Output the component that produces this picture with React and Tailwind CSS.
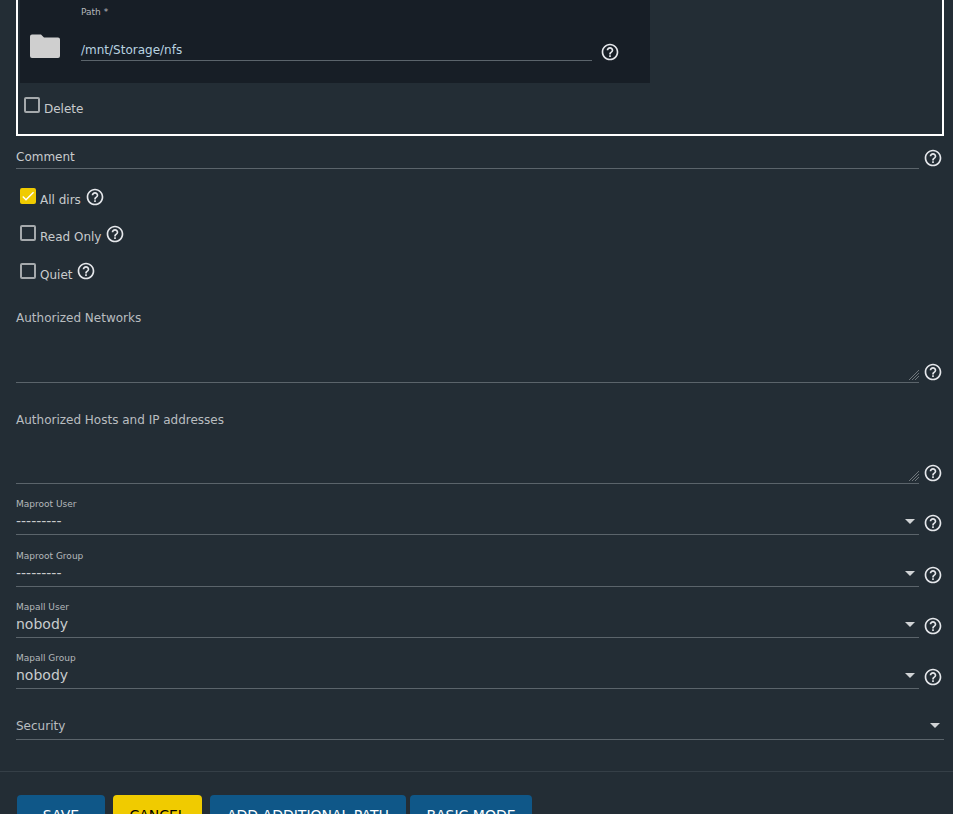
import React from "react";
import { MdHelpOutline, MdCheck } from "react-icons/md";

const Help = ({ className = "" }) => (
  <MdHelpOutline className={"text-xl text-gray-200 shrink-0 " + className} />
);

const Folder = () => (
  <svg className="w-8 h-6 ml-[-1px]" viewBox="0 0 32 24" fill="#cfcfcf">
    <path d="M1 2.5a2 2 0 0 1 2-2h9l3 3h14a2 2 0 0 1 2 2V22a2 2 0 0 1-2 2H3a2 2 0 0 1-2-2z" />
  </svg>
);

const Caret = () => (
  <div className="w-0 h-0 border-x-[5px] border-x-transparent border-t-[5px] border-t-[#d0d3d5]" />
);

const Check = ({ on, label, help = true, className = "", helpClass = "-mt-0.5" }) => (
  <div className={"flex items-center h-5 " + className}>
    <div
      className={
        "w-4 h-4 rounded-xs border-2 flex items-center justify-center -mt-1 " +
        (on ? "bg-[#f0cb00] border-[#f0cb00]" : "border-[#a5a9ac]")
      }
    >
      {on && <MdCheck className="text-white text-base shrink-0" />}
    </div>
    <span className="ml-1 mt-1 text-xs text-[#c8cbcd]">{label}</span>
    {help && <Help className={"ml-1 " + helpClass} />}
  </div>
);

const Select = ({ label, value, h = "h-[51px]" }) => (
  <div className={"flex items-end gap-1 pr-px " + h}>
    <div className="flex-1 border-b border-[#5b646b] h-9 flex flex-col">
      <div className="text-[9px] leading-3 -mt-px text-[#b4b8bb]">{label}</div>
      <div className="flex items-center justify-between flex-1 pr-1 pb-0.5">
        <span className="text-sm text-[#c8cbcd]">{value}</span>
        <Caret />
      </div>
    </div>
    <Help className="mb-0.5" />
  </div>
);

const TextArea = ({ label, h }) => (
  <div>
    <div className="text-xs text-[#b9bdc0] h-4">{label}</div>
    <div className="flex items-end gap-1 pr-px">
      <div className={"flex-1 border-b border-[#5b646b] relative " + h}>
        <svg className="absolute right-0 bottom-0.5 w-2.5 h-2.5" viewBox="0 0 10 10" stroke="#70777c" strokeWidth="1">
          <path d="M0 10 10 0M3 10 10 3M6 10 10 6" />
        </svg>
      </div>
      <Help className="mb-px" />
    </div>
  </div>
);

const Btn = ({ children, className }) => (
  <div className={"h-9 rounded-sm flex items-center justify-center text-sm pt-1 " + className}>{children}</div>
);

export default function App() {
  return (
    <div
      className="h-[814px] overflow-hidden bg-[#232d35] px-4 pr-[9px]"
      style={{ fontFamily: '"DejaVu Sans", sans-serif' }}
    >
      <div className="h-[136px] border-x-2 border-b-2 border-white pt-0 pl-0.5">
        <div className="w-[630px] h-[83px] bg-[#171e26] flex">
          <div className="w-[61px] pl-2.5 pt-[34px]">
            <Folder />
          </div>
          <div className="w-[511px] pt-1.5">
            <div className="text-[9px] leading-3 text-[#b4b8bb]">Path *</div>
            <div className="mt-6 h-[19px] border-b border-[#5b646b] text-xs text-[#b9d3e0]">/mnt/Storage/nfs</div>
          </div>
          <Help className="ml-2 mt-[42px]" />
        </div>
        <Check label="Delete" help={false} className="ml-1 mt-3.5" />
      </div>

      <div className="flex items-end gap-1 pr-px mt-[9px]">
        <div className="flex-1 border-b border-[#5b646b] h-6 text-xs text-[#c8cbcd] pt-1">Comment</div>
        <Help className="mb-px" />
      </div>

      <div className="mt-[19px] ml-1 flex flex-col gap-[17px]">
        <Check on label="All dirs" />
        <Check label="Read Only" />
        <Check label="Quiet" className="mt-px" helpClass="-mt-1" />
      </div>

      <div className="mt-[27px]">
        <TextArea label="Authorized Networks" h="h-[57px]" />
      </div>
      <div className="mt-[29px]">
        <TextArea label="Authorized Hosts and IP addresses" h="h-14" />
      </div>

      <Select label="Maproot User" value="---------" />
      <Select label="Maproot Group" value="---------" h="h-[52px]" />
      <Select label="Mapall User" value="nobody" />
      <Select label="Mapall Group" value="nobody" />

      <div className="h-[51px] flex items-end">
        <div className="flex-1 border-b border-[#5b646b] h-7 flex items-center justify-between pr-1 text-xs text-[#b9bdc0]">
          Security
          <Caret />
        </div>
      </div>

      <div className="-mx-4 -mr-[9px] border-t border-[#353f47] mt-[31px]" />

      <div className="flex mt-[23px] ml-px gap-2">
        <Btn className="w-[88px] bg-[#0f5788] text-white">SAVE</Btn>
        <Btn className="w-[89px] bg-[#f0cb00] text-black">CANCEL</Btn>
        <Btn className="w-[196px] bg-[#0f5788] text-white">ADD ADDITIONAL PATH</Btn>
        <Btn className="w-[122px] -ml-1 bg-[#0f5788] text-white">BASIC MODE</Btn>
      </div>
    </div>
  );
}
